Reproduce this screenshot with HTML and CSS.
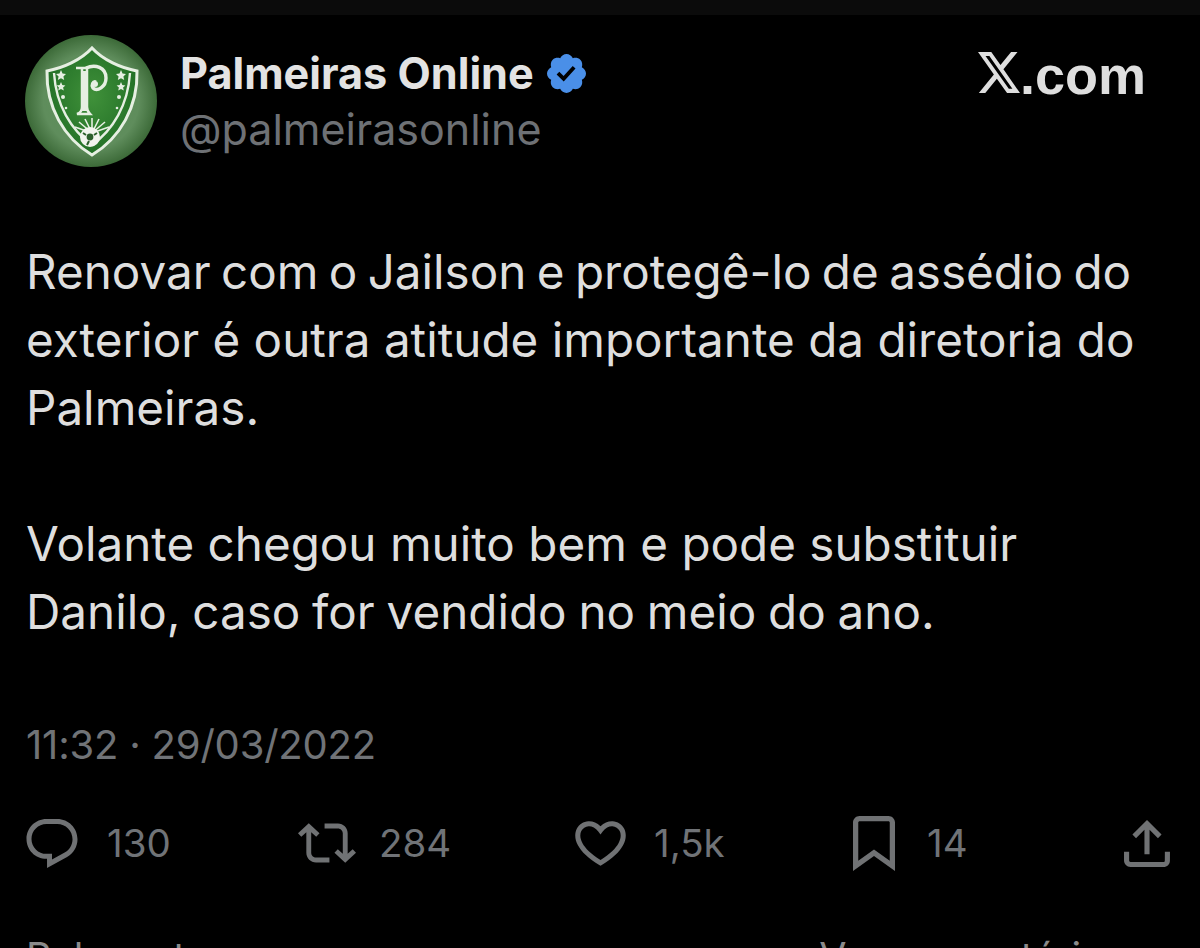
FILE: index.html
```html
<!DOCTYPE html>
<html lang="pt-BR">
<head>
<meta charset="utf-8">
<title>Palmeiras Online</title>
<link rel="stylesheet" href="styles.css">
</head>
<body>
<div class="strip"></div>
<main class="tweet">
  <header class="head">
    <svg class="avatar" viewBox="0 0 132 132" aria-label="Palmeiras Online">
      <defs>
        <radialGradient id="disc" cx="50%" cy="50%" r="50%">
          <stop offset="0" stop-color="#5b8f58"/>
          <stop offset="0.72" stop-color="#5f8d5c"/>
          <stop offset="1" stop-color="#3c6a38"/>
        </radialGradient>
        <radialGradient id="field" cx="50%" cy="45%" r="60%">
          <stop offset="0" stop-color="#40913a"/>
          <stop offset="1" stop-color="#1f6c24"/>
        </radialGradient>
      </defs>
      <circle cx="66" cy="66" r="66" fill="url(#disc)"/>
      <path d="M67 13 C78 25 96 33 112 36 C113 72 95 103 67 120 C39 103 21 72 22 36 C38 33 56 25 67 13Z" fill="url(#field)" stroke="#e6efe2" stroke-width="3"/>
      <path d="M29 38 C31 70 46 95 67 110 C88 95 103 70 105 38" fill="none" stroke="#e6efe2" stroke-width="2.4"/>
      <path d="M51 33 H63 M57 33 V72 C57 76 55 78 52 79 H65 C63 77 62 75 62 72 V33" fill="none" stroke="#e6efe2" stroke-width="2.5"/>
      <path d="M57 36 H62 V76 H57Z" fill="#e6efe2"/>
      <path d="M61 33 C70 29 81 32 81 43 C81 52 72 57 68 53 C66 50 68 46 71 47" fill="none" stroke="#e6efe2" stroke-width="3.4"/>
      <circle cx="70" cy="49" r="3" fill="#e6efe2"/>
      <g fill="#e6efe2">
        <polygon points="36,35 37.5,38.5 41,39 38.4,41.5 39.2,45 36,43.2 32.8,45 33.6,41.5 31,39 34.5,38.5"/>
        <polygon points="36,47 37.3,50 40.4,50.4 38.1,52.6 38.8,55.6 36,54 33.2,55.6 33.9,52.6 31.6,50.4 34.7,50"/>
        <polygon points="96,35 97.5,38.5 101,39 98.4,41.5 99.2,45 96,43.2 92.8,45 93.6,41.5 91,39 94.5,38.5"/>
        <polygon points="96,47 97.3,50 100.4,50.4 98.1,52.6 98.8,55.6 96,54 93.2,55.6 93.9,52.6 91.6,50.4 94.7,50"/>
        <circle cx="38" cy="62" r="2"/><circle cx="41" cy="73" r="1.3"/>
        <circle cx="94" cy="62" r="2"/><circle cx="92" cy="73" r="1.3"/>
      </g>
      <g stroke="#e6efe2" stroke-width="1.6">
        <path d="M67 98 V83 M67 98 L60 84 M67 98 L74 84 M67 98 L54 87 M67 98 L80 87 M67 98 L50 92 M67 98 L84 92"/>
      </g>
      <circle cx="65" cy="102" r="10" fill="#f2f4ee"/>
      <circle cx="65" cy="102" r="3.4" fill="#2c5f2c"/>
      <path d="M58 98 L61 100 M72 98 L69 100 M62 110 L64 106" stroke="#2c5f2c" stroke-width="2"/>
    </svg>
    <div class="who">
      <div class="name-row">
        <span class="name">Palmeiras Online</span>
        <svg class="badge" viewBox="1.75 1.75 20.5 20.5"><path fill="#4a8fe8" fill-rule="evenodd" d="M22.25 12c0-1.43-.88-2.67-2.19-3.34.46-1.39.2-2.9-.81-3.91s-2.52-1.27-3.91-.81c-.66-1.31-1.91-2.19-3.34-2.19s-2.67.88-3.33 2.19c-1.4-.46-2.91-.2-3.92.81s-1.26 2.52-.8 3.91c-1.31.67-2.2 1.91-2.2 3.34s.89 2.67 2.2 3.34c-.46 1.39-.21 2.9.8 3.91s2.52 1.26 3.91.81c.67 1.31 1.91 2.19 3.34 2.19s2.68-.88 3.34-2.19c1.39.45 2.9.2 3.91-.81s1.27-2.52.81-3.91c1.31-.67 2.19-1.91 2.19-3.34zm-11.71 4.2L6.8 12.46l1.41-1.42 2.26 2.26 4.8-5.23 1.47 1.36-6.2 6.77z"/></svg>
      </div>
      <div class="handle">@palmeirasonline</div>
    </div>
    <div class="brand">
      <svg class="xlogo" viewBox="1.25 2.25 21.58 19.5" preserveAspectRatio="none"><path fill="#dedede" d="M18.244 2.25h3.308l-7.227 8.26 8.502 11.24H16.17l-5.214-6.817L4.99 21.75H1.68l7.73-8.835L1.254 2.25H8.08l4.713 6.231zm-1.161 17.52h1.833L7.084 4.126H5.117z"/></svg>
      <span class="dotcom">.com</span>
    </div>
  </header>

  <div class="body">
    <p><span class="ln ln-a">Renovar com o Jailson e protegê-lo de assédio do</span><span class="ln ln-b">exterior é outra atitude importante da diretoria do</span><span class="ln">Palmeiras.</span></p>
    <p><span class="ln ln-b">Volante chegou muito bem e pode substituir</span><span class="ln ln-c">Danilo, caso for vendido no meio do ano.</span></p>
  </div>

  <div class="stamp">11:32 · 29/03/2022</div>

  <div class="stats">
    <div class="stat">
      <svg class="ic ic-reply" viewBox="1.75 2 20.5 19.7"><path d="M1.751 10c0-4.42 3.584-8 8.005-8h4.366c4.49 0 8.129 3.64 8.129 8.13 0 2.96-1.607 5.68-4.196 7.11l-8.054 4.46v-3.69h-.067c-4.49.1-8.183-3.51-8.183-8.01zm8.005-6c-3.317 0-6.005 2.69-6.005 6 0 3.37 2.77 6.08 6.138 6.01l.351-.01h1.761v2.3l5.087-2.81c1.951-1.08 3.163-3.13 3.163-5.36 0-3.39-2.744-6.13-6.129-6.13H9.756z"/></svg>
      <span class="count c-reply">130</span>
    </div>
    <div class="stat">
      <svg class="ic ic-rt" viewBox="0.07 3.88 23.86 16.24"><path d="M4.5 3.88l4.432 4.14-1.364 1.46L5.5 7.55V16c0 1.1.896 2 2 2H13v2H7.5c-2.209 0-4-1.79-4-4V7.55L1.432 9.48.068 8.02 4.5 3.88zM16.5 6H11V4h5.5c2.209 0 4 1.79 4 4v8.45l2.068-1.93 1.364 1.46-4.432 4.14-4.432-4.14 1.364-1.46 2.068 1.93V8c0-1.1-.896-2-2-2z"/></svg>
      <span class="count c-rt">284</span>
    </div>
    <div class="stat">
      <svg class="ic ic-like" viewBox="1.9 3.5 20.2 17.7"><path d="M16.697 5.5c-1.222-.06-2.679.51-3.89 2.16l-.805 1.09-.806-1.09C9.984 6.01 8.526 5.44 7.304 5.5c-1.243.07-2.349.78-2.91 1.91-.552 1.12-.633 2.78.479 4.82 1.074 1.97 3.257 4.27 7.129 6.61 3.87-2.34 6.052-4.64 7.126-6.61 1.111-2.04 1.03-3.7.477-4.82-.561-1.13-1.666-1.84-2.908-1.91zm4.187 7.69c-1.351 2.48-4.001 5.12-8.379 7.67l-.503.3-.504-.3c-4.379-2.55-7.029-5.19-8.382-7.67-1.36-2.5-1.41-4.86-.514-6.67.887-1.79 2.647-2.91 4.601-3.01 1.651-.09 3.368.56 4.798 2.01 1.429-1.45 3.146-2.1 4.796-2.01 1.954.1 3.714 1.22 4.601 3.01.896 1.81.846 4.17-.514 6.67z"/></svg>
      <span class="count c-like">1,5k</span>
    </div>
    <div class="stat">
      <svg class="ic ic-mark" viewBox="4 2 16 20.94"><path d="M4 4.5C4 3.12 5.119 2 6.5 2h11C18.881 2 20 3.12 20 4.5v18.44l-8-5.71-8 5.71V4.5zM6.5 4c-.276 0-.5.22-.5.5v14.56l6-4.29 6 4.29V4.5c0-.28-.224-.5-.5-.5h-11z"/></svg>
      <span class="count c-mark">14</span>
    </div>
    <div class="stat">
      <svg class="ic ic-share" viewBox="3 2.59 18 18.41"><path d="M12 2.59l5.7 5.7-1.41 1.42L13 6.41V16h-2V6.41l-3.3 3.3-1.41-1.42L12 2.59zM21 15l-.02 3.51c0 1.38-1.12 2.49-2.5 2.49H5.5C4.11 21 3 19.88 3 18.5V15h2v3.5c0 .28.22.5.5.5h12.98c.28 0 .5-.22.5-.49L19 15h2z"/></svg>
    </div>
  </div>

  <div class="foot">
    <span>Relevantes</span>
    <span>Ver comentários ›</span>
  </div>
</main>
</body>
</html>
```

FILE: styles.css
```css
* { box-sizing: border-box; }
html, body { margin: 0; height: 948px; overflow: hidden; background: #000; }
body { font-family: "Inter", "Noto Sans", sans-serif; color: #e2e2e2; }
.strip { height: 15px; background: #0b0b0b; }
.tweet { padding: 20px 30px 0 26px; }
.head { display: flex; align-items: flex-start; }
.avatar { width: 132px; height: 132px; margin-left: -1px; flex: none; }
.who { margin-left: 23px; padding-top: 13px; flex: 1; }
.name-row { display: flex; align-items: center; height: 50px; gap: 13px; }
.name { font-size: 43.2px; font-weight: 700; line-height: 48px; color: #e3e3e3; white-space: nowrap; }
.badge { width: 39px; height: 39px; flex: none; }
.handle { font-size: 43px; line-height: 62px; color: #6e7175; }
.brand { display: flex; align-items: flex-start; padding-top: 17px; margin-right: 24px; }
.xlogo { width: 42px; height: 41px; }
.dotcom { font-family: "Liberation Sans", sans-serif; font-weight: 700; font-size: 54px; line-height: 46px; color: #dedede; }
.body { display: flex; flex-direction: column; gap: 68px; margin-top: 71px; font-size: 47.6px; line-height: 68px; color: #dedede; }
.body p { margin: 0; }
.ln { display: block; white-space: nowrap; word-spacing: -2px; }
.ln-a { word-spacing: -3px; }
.ln-b { word-spacing: 0; }
.ln-c { word-spacing: -1.6px; }
.stamp { margin-top: 74px; font-size: 40px; line-height: 50px; letter-spacing: -0.2px; color: #707377; }
.stats { display: grid; grid-template-columns: 272px 277px 278px 271px auto; margin-top: 45px; height: 56px; }
.stat { display: flex; align-items: center; }
.ic { fill: #707274; flex: none; }
.ic-reply { width: 52px; height: 49px; }
.ic-rt { width: 58px; height: 40px; }
.ic-like { width: 51px; height: 45px; }
.ic-mark { width: 42px; height: 55px; }
.ic-share { width: 46px; height: 47px; }
.count { font-size: 38.5px; color: #707377; }
.c-reply { margin-left: 29px; }
.c-rt { margin-left: 23px; }
.c-like { margin-left: 28px; }
.c-mark { margin-left: 32px; }
.foot { display: flex; justify-content: space-between; margin-top: 61px; padding-right: 18px; font-size: 39.5px; line-height: 50px; color: #8a8a8a; }
```
